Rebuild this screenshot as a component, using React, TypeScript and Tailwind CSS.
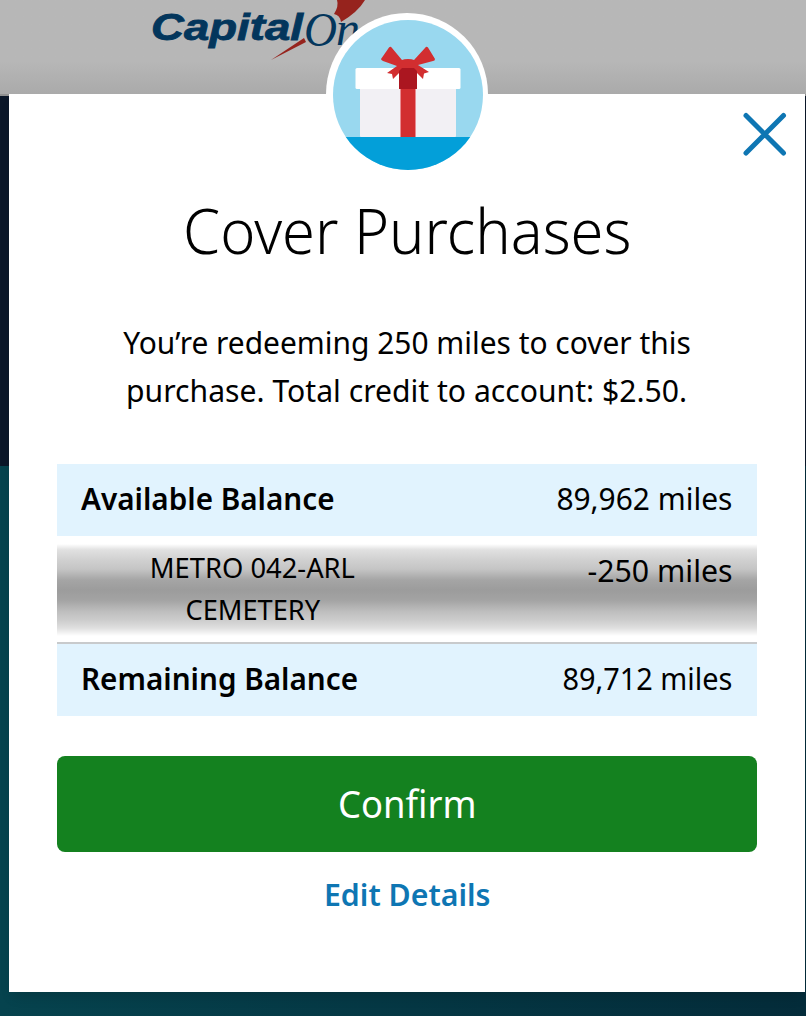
import type { ReactNode } from 'react';
import clsx from 'clsx';

function BrandLogo() {
  return (
    <svg width="250" height="64" viewBox="150 0 250 64" className="ml-[150px] block" aria-label="Capital One">
      <path d="M337 0 Q339 6 334 14 Q340 15 341 22 Q358 12 365 0 Z" fill="#96231d" />
      <path d="M271 60 L304 38 L306 42 Z" fill="#96231d" />
      <text
        x="151"
        y="39.5"
        textLength="152"
        lengthAdjust="spacingAndGlyphs"
        fill="#03365c"
        stroke="#03365c"
        strokeWidth="0.8"
        className="font-['Liberation_Sans',sans-serif] text-[36px] font-bold italic"
      >
        Capital
      </text>
      <text
        x="304"
        y="45.5"
        textLength="33"
        lengthAdjust="spacingAndGlyphs"
        fill="#03365c"
        className="font-['Liberation_Serif',serif] text-[48px] italic"
      >
        O
      </text>
      <text x="336" y="45" fill="#03365c" className="font-['Liberation_Serif',serif] text-[48px] italic">
        ne
      </text>
    </svg>
  );
}

function GiftBadge() {
  return (
    <svg width="162" height="162" viewBox="326 13 162 162" className="block">
      <defs>
        <clipPath id="badge">
          <circle cx="408" cy="95" r="75" />
        </clipPath>
      </defs>
      <circle cx="407" cy="94" r="81" fill="#fff" />
      <g clipPath="url(#badge)">
        <rect x="326" y="13" width="163" height="163" fill="#99d8ef" />
        <rect x="326" y="137" width="163" height="40" fill="#039fd9" />
        <rect x="360" y="87" width="96" height="50" rx="1" fill="#f2f0f4" />
        <rect x="355.5" y="68" width="105" height="21" rx="1.5" fill="#fff" />
        <rect x="400" y="89" width="16" height="48" fill="#e88b91" />
        <rect x="401" y="89" width="14" height="48" fill="#d22e30" />
        <path
          d="M389 47.5 Q390.5 46 392 48 L402 60 Q404 59 408 59 Q412 59 414 60 L425 48 Q426.5 46 428 47.5 L435 59 Q435 61 433 61 L418 65 L429 72 L424 73.5 L423 79 L413 69 H403 L393 79 L392 74 L387 73 L397 66 L383 61 Q381 60 381 59 Z"
          fill="#d22e30"
        />
        <path d="M399 71 L402 68 H414 L417 71 V89 H399 Z" fill="#ab1620" />
      </g>
    </svg>
  );
}

function Amount({ children, className }: { children: ReactNode; className?: string }) {
  return (
    <span className={clsx('origin-right text-[31px] whitespace-nowrap', className)}>{children}</span>
  );
}

function BalanceRow({ label, value, valueClass }: { label: string; value: string; valueClass: string }) {
  return (
    <div className="flex h-18 items-center justify-between bg-[#e1f3fe] pr-[25px] pb-1 pl-6">
      <span className="origin-left scale-x-[0.957] text-[31px] font-semibold whitespace-nowrap">{label}</span>
      <Amount className={valueClass}>{value}</Amount>
    </div>
  );
}

export default function App() {
  return (
    <div className="relative h-[1016px] w-[806px] overflow-hidden bg-white font-['Noto_Sans',sans-serif] text-black">
      {/* Page behind the dialog */}
      <div className="flex h-full flex-col">
        <header className="h-24 border-b-2 border-[#919191] bg-linear-to-b from-[#b7b7b7] from-65% to-[#aaaaaa]">
          <BrandLogo />
        </header>
        <div className="h-[370px] bg-[#0b1729]" />
        <div className="grow bg-linear-to-r from-[#06434e] to-[#042c3a]" />
      </div>

      {/* Dialog */}
      <main className="absolute top-[94px] left-[9px] flex h-[898px] w-[796px] flex-col bg-white px-12 shadow-[0_8px_12px_-4px_rgba(0,0,0,0.15)]">
        <div className="absolute -top-[81px] left-[317px]">
          <GiftBadge />
        </div>
        <button aria-label="Close" className="absolute top-4 right-4">
          <svg width="48" height="48" viewBox="0 0 48 48" fill="none" stroke="#0e76b3" strokeWidth="5" strokeLinecap="round">
            <path d="M5 5.5 L42.5 43 M42.5 5.5 L5 43" />
          </svg>
        </button>

        <h1 className="mt-[96px] flex h-20 items-center justify-center text-[62px] leading-none font-light whitespace-nowrap">
          <span className="scale-x-[0.961]">Cover Purchases</span>
        </h1>

        <p className="mt-12 flex flex-col items-center text-[31px] leading-[48px] whitespace-nowrap">
          <span className="scale-x-[0.965]">You’re redeeming 250 miles to cover this</span>
          <span className="scale-x-[0.972]">purchase. Total credit to account: $2.50.</span>
        </p>

        <div className="mt-[50px]">
          <BalanceRow label="Available Balance" value="89,962 miles" valueClass="scale-x-[0.965]" />
          <div className="flex h-[108px] items-start justify-between border-b-2 border-[#c8cacc] bg-[linear-gradient(to_bottom,#fff_0px,#fff_8px,#e0e0e0_14px,#cfcfcf_25px,#c5c5c5_33px,#a5a5a5_44px,#9c9c9c_54px,#a3a3a3_64px,#bfbfbf_76px,#cccccc_84px,#dfdfdf_92px,#fff_100px)] pr-6 pl-[93px]">
            <div className="mt-[11px] flex w-[205px] flex-col items-center text-[27px] leading-[42px] whitespace-nowrap">
              <span className="scale-x-[1.013]">METRO 042-ARL</span>
              <span className="scale-x-[1.007]">CEMETERY</span>
            </div>
            <Amount className="mt-2.5 scale-x-[0.977] leading-[48px]">-250 miles</Amount>
          </div>
          <BalanceRow label="Remaining Balance" value="89,712 miles" valueClass="scale-x-[0.932]" />
        </div>

        <button className="mt-10 flex h-24 items-center justify-center rounded-lg bg-[#14811f] pb-0.5 text-[39px] text-white">
          <span className="scale-x-[0.934]">Confirm</span>
        </button>
        <a className="mt-[18px] self-center text-[31px] leading-[48px] font-semibold text-[#0e76b3]">
          <span className="inline-block scale-x-[0.977]">Edit Details</span>
        </a>
      </main>
    </div>
  );
}
